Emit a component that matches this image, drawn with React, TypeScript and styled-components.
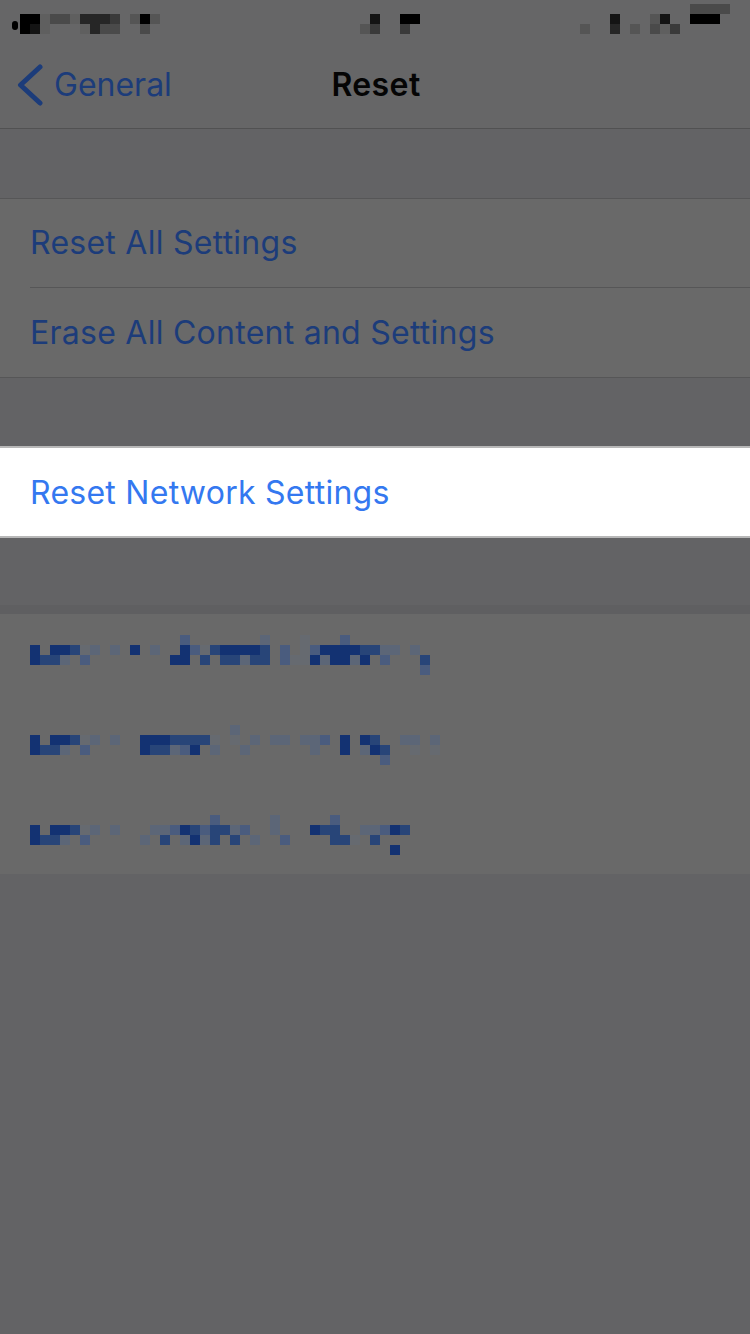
import React from "react";
import styled, { createGlobalStyle } from "styled-components";

const Global = createGlobalStyle`
  html, body { margin: 0; padding: 0; background: #636365; }
  body { font-family: Inter, "Liberation Sans", sans-serif; }
`;

const Page = styled.div`
  width: 750px;
  height: 1334px;
  background: #636365;
  overflow: hidden;
  display: flex;
  flex-direction: column;
`;

const Header = styled.header`
  height: 128px;
  background: #666667;
  border-bottom: 1px solid #515152;
  display: flex;
  flex-direction: column;
`;

const StatusBar = styled.svg`
  display: block;
  width: 750px;
  height: 40px;
  flex: none;
`;

const NavBar = styled.nav`
  flex: 1;
  position: relative;
  display: flex;
  align-items: center;
  justify-content: center;
  padding-top: 2px;
  padding-left: 2px;
`;

const BackLink = styled.div`
  position: absolute;
  left: 17px;
  top: 24px;
  display: flex;
  align-items: center;
  gap: 12px;
  color: #1c3c7a;
  font-size: 32px;
  letter-spacing: 0;
  line-height: 40px;
`;

const BackChevron = styled.svg`
  display: block;
  margin-right: -1px;
  flex: none;
`;

const Title = styled.h1`
  margin: 0;
  color: #050505;
  font-size: 32px;
  font-weight: 600;
  letter-spacing: 0.4px;
  line-height: 40px;
`;

const Group = styled.section<{ $top: number; $tone: string; $edge: string }>`
  margin-top: ${(p) => p.$top}px;
  background: ${(p) => p.$tone};
  border-top: 1px solid ${(p) => p.$edge};
  border-bottom: 1px solid ${(p) => p.$edge};
`;

const HighlightGroup = styled.section`
  margin-top: 68px;
  background: #ffffff;
  border-top: 2px solid #b8b8b8;
  border-bottom: 2px solid #b8b8b8;
`;

const Cell = styled.div<{ $color: string; $height?: number; $shift?: number }>`
  box-sizing: border-box;
  height: ${(p) => p.$height ?? 88}px;
  padding-top: ${(p) => p.$shift ?? 0}px;
  display: flex;
  align-items: center;
  padding-left: 30px;
  color: ${(p) => p.$color};
  font-size: 32px;
  letter-spacing: 0.26px;
  line-height: 40px;
`;

const Separator = styled.div`
  height: 1px;
  margin-left: 30px;
  background: #565657;
`;

const ShadowBand = styled.div`
  margin-top: 67px;
  height: 9px;
  background: #5f5f61;
`;

const BlurredGroup = styled.section`
  box-sizing: border-box;
  height: 260px;
  padding-top: 21px;
  background: #696969;
  display: flex;
  flex-direction: column;
  gap: 50px;
`;

const BlurredRow = styled.svg`
  display: block;
  flex: none;
  width: 420px;
  height: 40px;
  margin-left: 30px;
`;

const LEVELS: Record<string, string> = {
  "1": "#666a70",
  "2": "#5c6677",
  "3": "#4a5c7e",
  "4": "#284578",
  "5": "#133272",
};

const GREYS: Record<string, string> = {
  a: "#000000",
  b: "#141414",
  c: "#262626",
  d: "#3a3a3a",
  e: "#4a4a4a",
  f: "#555555",
  g: "#5f5f5f",
};

type Cells = [number, number, string][];

function cellsFrom(spec: Record<number, Record<number, number>>): Cells {
  const out: Cells = [];
  for (const y of Object.keys(spec)) {
    const row = spec[Number(y)];
    for (const x of Object.keys(row)) {
      out.push([Number(x), Number(y), LEVELS[String(row[Number(x)])]]);
    }
  }
  return out;
}

const ROW_A = cellsFrom({
  0: { 15: 3, 23: 2, 27: 1, 31: 3 },
  1: {
    0: 5, 2: 5, 3: 5, 4: 4, 5: 1, 6: 2, 8: 2, 10: 5, 12: 2, 15: 5, 16: 3, 17: 1, 18: 4, 19: 5, 20: 5, 21: 5, 22: 5, 23: 4,
    25: 3, 27: 1, 28: 3, 29: 5, 30: 5, 31: 5, 32: 5, 33: 4, 34: 4, 35: 2, 36: 2, 38: 2,
  },
  2: {
    0: 5, 1: 4, 2: 4, 3: 2, 5: 3, 14: 5, 15: 5, 17: 4, 19: 4, 20: 4, 21: 2, 22: 4, 23: 4, 25: 3, 26: 1, 27: 1, 28: 5, 29: 2,
    30: 5, 31: 5, 32: 2, 33: 5, 35: 3, 39: 4,
  },
  3: { 39: 3 },
});

const ROW_B = cellsFrom({
  0: { 20: 2 },
  1: {
    0: 5, 2: 5, 3: 5, 4: 4, 5: 1, 6: 2, 8: 2, 11: 5, 12: 5, 13: 5, 14: 4, 15: 4, 16: 4, 17: 4, 18: 1, 20: 1, 22: 2, 24: 2,
    25: 2, 27: 2, 28: 2, 29: 3, 31: 5, 33: 5, 34: 4, 37: 2, 38: 2, 40: 2,
  },
  2: {
    0: 5, 1: 4, 2: 4, 3: 2, 5: 3, 11: 5, 12: 4, 13: 4, 14: 2, 15: 3, 16: 5, 18: 2, 21: 2, 28: 2, 31: 5, 33: 2, 34: 5, 35: 4,
    38: 1, 40: 1,
  },
  3: { 35: 3 },
});

const ROW_C = cellsFrom({
  0: { 18: 3, 24: 2, 30: 3 },
  1: {
    0: 5, 2: 5, 3: 5, 4: 4, 5: 1, 6: 2, 8: 2, 12: 2, 13: 2, 14: 3, 15: 5, 16: 4, 17: 3, 18: 4, 19: 4, 20: 2, 21: 3, 24: 2,
    28: 5, 29: 4, 30: 4, 33: 2, 34: 2, 35: 3, 36: 5, 37: 4,
  },
  2: {
    0: 5, 1: 4, 2: 4, 3: 2, 5: 3, 11: 2, 13: 4, 15: 2, 16: 5, 17: 2, 18: 4, 20: 4, 22: 2, 25: 3, 30: 4, 31: 4, 32: 1, 34: 4,
  },
  3: { 36: 5 },
});

const STATUS: [number, number, number, number, string][] = [
  [20, 14, 20, 10, "a"], [20, 24, 10, 10, "a"], [30, 24, 10, 10, "b"],
  [40, 14, 10, 20, "g"], [50, 14, 20, 10, "e"], [70, 14, 10, 10, "g"],
  [80, 14, 30, 10, "c"], [110, 14, 10, 10, "d"], [80, 24, 10, 10, "g"],
  [90, 24, 10, 10, "c"], [100, 24, 20, 10, "e"],
  [130, 14, 10, 10, "f"], [140, 14, 10, 10, "a"], [150, 14, 10, 10, "f"], [140, 24, 10, 10, "e"],
  [370, 14, 10, 10, "b"], [360, 24, 10, 10, "f"], [370, 24, 10, 10, "d"],
  [400, 14, 20, 10, "a"], [400, 24, 10, 10, "d"],
  [580, 24, 10, 10, "f"], [610, 14, 10, 10, "b"], [610, 24, 10, 10, "c"], [630, 24, 10, 10, "f"],
  [650, 14, 10, 10, "f"], [660, 14, 10, 10, "b"], [650, 24, 10, 10, "e"], [660, 24, 10, 10, "g"], [670, 24, 10, 10, "d"],
  [690, 4, 40, 10, "e"], [690, 14, 30, 10, "a"],
];

function BlurredText({ cells }: { cells: Cells }) {
  return (
    <BlurredRow viewBox="0 0 420 40">
      {cells.map(([x, y, c]) => (
        <rect key={`${x}-${y}`} x={x * 10} y={y * 10} width={10} height={10} fill={c} />
      ))}
    </BlurredRow>
  );
}

export default function App() {
  return (
    <Page>
      <Global />
      <Header>
        <StatusBar viewBox="0 0 750 40">
          <rect x={12} y={21} width={6} height={9} rx={3} fill="#000" />
          {STATUS.map(([x, y, w, h, c]) => (
            <rect key={`${x}-${y}`} x={x} y={y} width={w} height={h} fill={GREYS[c]} />
          ))}
        </StatusBar>
        <NavBar>
          <BackLink>
            <BackChevron width="26" height="42" viewBox="0 0 26 42" fill="none">
              <path d="M23 3 L3.5 21 L23 39" stroke="#1c3c7a" strokeWidth="5" strokeLinecap="round" strokeLinejoin="round" />
            </BackChevron>
            General
          </BackLink>
          <Title>Reset</Title>
        </NavBar>
      </Header>
      <Group $top={69} $tone="#696969" $edge="#565657">
        <Cell $color="#1c3c7a">Reset All Settings</Cell>
        <Separator />
        <Cell $color="#1c3c7a" $height={89} $shift={1}>Erase All Content and Settings</Cell>
      </Group>
      <HighlightGroup>
        <Cell $color="#3478f0" $shift={2}>Reset Network Settings</Cell>
      </HighlightGroup>
      <ShadowBand />
      <BlurredGroup>
        <BlurredText cells={ROW_A} />
        <BlurredText cells={ROW_B} />
        <BlurredText cells={ROW_C} />
      </BlurredGroup>
    </Page>
  );
}
